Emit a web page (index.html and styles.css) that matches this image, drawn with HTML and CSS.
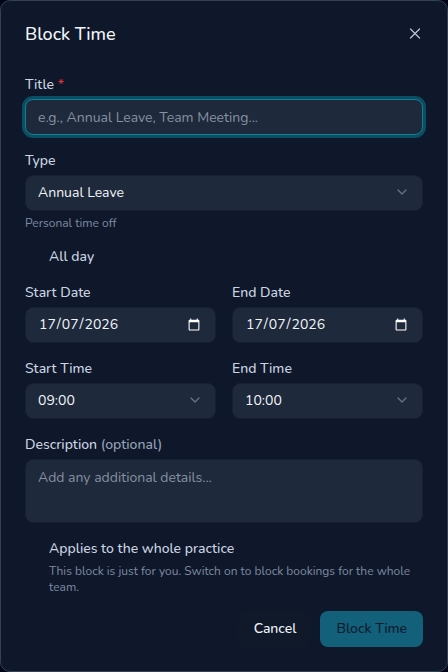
FILE: index.html
```
<!DOCTYPE html>
<html lang="en-GB">
<head>
	<meta charset="UTF-8">
	<meta name="viewport" content="width=device-width, initial-scale=1">
	<title>Block Time</title>
	<link rel="stylesheet" href="styles.css">
</head>
<body>
	<main class="dialog" role="dialog" aria-labelledby="dialog-title">
		<header class="dialog_head">
			<h1 id="dialog-title">Block Time</h1>
			<button type="button" class="close" aria-label="Close">
				<svg width="16" height="16" viewBox="0 0 16 16"><path d="M3.5 3l9 9M12.5 3l-9 9"/></svg>
			</button>
		</header>

		<form class="form">
			<div class="fields">
				<div class="field">
					<label for="title">Title <span class="required">*</span></label>
					<input class="control is_active" type="text" id="title" placeholder="e.g., Annual Leave, Team Meeting...">
				</div>

				<div class="field">
					<label for="type">Type</label>
					<div class="select">
						<select class="control" id="type"><option>Annual Leave</option></select>
						<svg class="chevron" width="16" height="16" viewBox="0 0 16 16"><path d="M4 6l4 4 4-4"/></svg>
					</div>
					<p class="hint">Personal time off</p>
				</div>

				<div class="check all_day">
					<input type="checkbox" id="all-day">
					<label for="all-day">All day</label>
				</div>

				<div class="row">
					<div class="field">
						<label for="start-date">Start Date</label>
						<input class="control" type="date" id="start-date" value="2026-07-17">
					</div>
					<div class="field">
						<label for="end-date">End Date</label>
						<input class="control" type="date" id="end-date" value="2026-07-17">
					</div>
				</div>

				<div class="row">
					<div class="field">
						<label for="start-time">Start Time</label>
						<div class="select">
							<select class="control" id="start-time"><option>09:00</option></select>
							<svg class="chevron" width="16" height="16" viewBox="0 0 16 16"><path d="M4 6l4 4 4-4"/></svg>
						</div>
					</div>
					<div class="field">
						<label for="end-time">End Time</label>
						<div class="select">
							<select class="control" id="end-time"><option>10:00</option></select>
							<svg class="chevron" width="16" height="16" viewBox="0 0 16 16"><path d="M4 6l4 4 4-4"/></svg>
						</div>
					</div>
				</div>

				<div class="field">
					<label for="description">Description <span class="optional">(optional)</span></label>
					<textarea class="control" id="description" placeholder="Add any additional details..."></textarea>
				</div>

				<div class="check">
					<input type="checkbox" id="practice">
					<div>
						<label for="practice">Applies to the whole practice</label>
						<p class="hint">This block is just for you. Switch on to block bookings for the whole team.</p>
					</div>
				</div>
			</div>

			<footer class="actions">
				<button type="button" class="btn">Cancel</button>
				<button type="submit" class="btn primary">Block Time</button>
			</footer>
		</form>
	</main>
</body>
</html>
```

FILE: styles.css
```
* {
	box-sizing: border-box;
}
body {
	margin: 0;
	background: #020617;
	color: #f1f5f9;
	color-scheme: dark;
	font: 14px/20px Nunito, Lato, sans-serif;
}
h1, p {
	margin: 0;
}
input, select, textarea, button {
	margin: 0;
	font: inherit;
	color: inherit;
}
svg {
	fill: none;
	stroke: currentColor;
	stroke-width: 1.3;
	stroke-linecap: round;
	stroke-linejoin: round;
}
.dialog {
	min-height: 100vh;
	padding: 24px;
	background: #0f172a;
	border: 1px solid #334155;
	border-radius: 10px;
}
.dialog_head {
	display: flex;
	align-items: center;
	justify-content: space-between;
	margin-bottom: 34px;
}
.dialog_head h1 {
	font-size: 18px;
	line-height: 18px;
	font-weight: 500;
}
.close {
	display: flex;
	padding: 0;
	border: 0;
	background: none;
	color: #b6c0ce;
}
.form {
	display: flex;
	flex-direction: column;
	gap: 16px;
}
.fields {
	display: flex;
	flex-direction: column;
	gap: 18px;
}
.field {
	min-width: 0;
}
label {
	display: block;
	color: #cbd5e1;
	font-weight: 500;
	line-height: 16px;
}
.field label {
	margin-bottom: 6px;
}
.required {
	color: #dc2f3a;
}
.optional {
	color: #94a3b8;
}
.control {
	display: block;
	width: 100%;
	height: 36px;
	padding: 0 12px;
	appearance: none;
	background: #1e293b;
	border: 1px solid #152132;
	border-radius: 8px;
	outline: 0;
}
.control::placeholder {
	color: #8691a1;
	opacity: 1;
}
.control.is_active {
	border-color: #0e8295;
	box-shadow: 0 0 0 3px #0b4d61;
}
textarea.control {
	height: 64px;
	padding: 8px 12px;
	resize: none;
}
/* day / month / year, whatever the browser locale */
.control::-webkit-datetime-edit-fields-wrapper {
	display: inline-grid;
	grid-template-columns: repeat(5, auto);
}
.control::-webkit-datetime-edit-day-field {
	grid-area: 1 / 1;
}
.control::-webkit-datetime-edit-month-field {
	grid-area: 1 / 3;
}
.control::-webkit-datetime-edit-year-field {
	grid-area: 1 / 5;
}
.select {
	position: relative;
}
.chevron {
	position: absolute;
	top: 9px;
	right: 13px;
	color: #64748b;
	pointer-events: none;
}
.hint {
	margin-top: 4px;
	color: #7c8ba1;
	font-size: 12px;
	line-height: 16px;
}
.row {
	display: grid;
	grid-template-columns: 1fr 1fr;
	gap: 16px;
}
.check {
	display: flex;
	gap: 8px;
}
.check input {
	flex: none;
	width: 16px;
	height: 16px;
	appearance: none;
}
.check .hint {
	margin-top: 6px;
}
.all_day {
	padding-bottom: 2px;
}
.actions {
	display: flex;
	justify-content: flex-end;
	gap: 8px;
}
.btn {
	height: 36px;
	padding: 0 16px;
	border: 0;
	border-radius: 8px;
	background: #0f1929;
	font-weight: 500;
}
.btn.primary {
	background: #13607a;
	color: #0a1b30;
}
```
